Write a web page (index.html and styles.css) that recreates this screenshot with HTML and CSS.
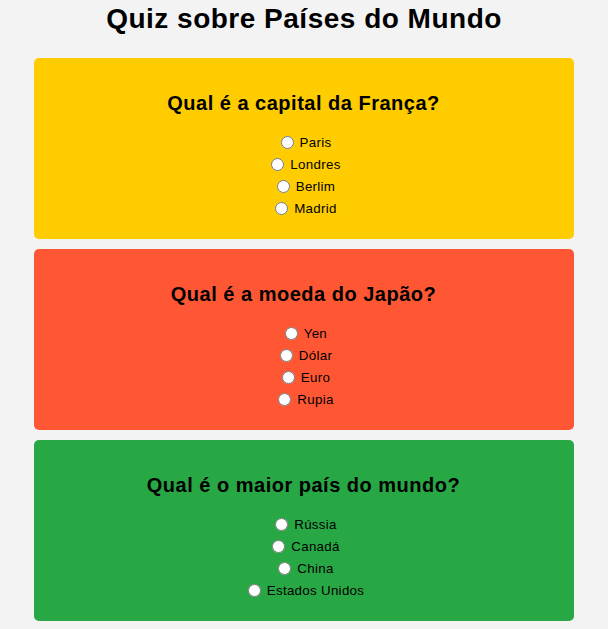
FILE: index.html
```html
<!DOCTYPE html>
<html lang="pt">
<head>
<meta charset="utf-8">
<title>Quiz sobre Países do Mundo</title>
<link rel="stylesheet" href="styles.css">
</head>
<body>
<h1 class="title">Quiz sobre Países do Mundo</h1>
<div class="quiz">
  <div class="card card-yellow">
    <h2 class="question">Qual é a capital da França?</h2>
    <div class="options">
      <label class="option"><input type="radio" name="q1"> Paris</label>
      <label class="option"><input type="radio" name="q1"> Londres</label>
      <label class="option"><input type="radio" name="q1"> Berlim</label>
      <label class="option"><input type="radio" name="q1"> Madrid</label>
    </div>
  </div>
  <div class="card card-red">
    <h2 class="question">Qual é a moeda do Japão?</h2>
    <div class="options">
      <label class="option"><input type="radio" name="q2"> Yen</label>
      <label class="option"><input type="radio" name="q2"> Dólar</label>
      <label class="option"><input type="radio" name="q2"> Euro</label>
      <label class="option"><input type="radio" name="q2"> Rupia</label>
    </div>
  </div>
  <div class="card card-green">
    <h2 class="question">Qual é o maior país do mundo?</h2>
    <div class="options">
      <label class="option"><input type="radio" name="q3"> Rússia</label>
      <label class="option"><input type="radio" name="q3"> Canadá</label>
      <label class="option"><input type="radio" name="q3"> China</label>
      <label class="option"><input type="radio" name="q3"> Estados Unidos</label>
    </div>
  </div>
</div>
</body>
</html>
```
FILE: styles.css
```css
html, body {
  margin: 0;
  padding: 0;
}
body {
  background: #f3f3f3;
  font-family: "Liberation Sans", Arial, sans-serif;
  color: #000;
}
.title {
  font-size: 28px;
  font-weight: bold;
  text-align: center;
  margin: 0;
  padding-top: 3px;
  line-height: 32px;
  letter-spacing: 0.5px;
}
.quiz {
  width: 540px;
  margin: 23px auto 0;
  padding-right: 1px;
  display: flex;
  flex-direction: column;
  gap: 10px;
}
.card {
  border-radius: 5px;
  padding: 20px 20px 19px;
  text-align: center;
}
.card-yellow { background: #ffcc00; }
.card-red { background: #ff5733; }
.card-green { background: #28a745; }
.question {
  font-size: 20px;
  margin: 13px 0 17px;
  line-height: 24px;
  letter-spacing: 0.5px;
}
.options {
  display: flex;
  flex-direction: column;
  align-items: center;
}
.option {
  font-size: 13.33px;
  line-height: 22px;
  display: block;
  letter-spacing: 0.3px;
}
.option input {
  margin: 3px 2px 0 5px;
  vertical-align: -2px;
}
```
